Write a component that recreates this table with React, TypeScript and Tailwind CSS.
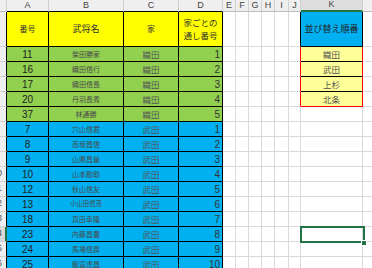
import React from "react";

const jp = { fontFamily: '"Noto Sans CJK JP", "Noto Sans", sans-serif' };
const num = { fontFamily: '"Liberation Sans", Arial, sans-serif' };

const oda = [
  [11, "柴田勝家", "織田", 1],
  [16, "織田信行", "織田", 2],
  [17, "織田信長", "織田", 3],
  [20, "丹羽長秀", "織田", 4],
  [37, "林通勝", "織田", 5],
];

const takeda = [
  [7, "穴山信君", "武田", 1],
  [8, "高坂昌信", "武田", 2],
  [9, "山県昌景", "武田", 3],
  [10, "山本勘助", "武田", 4],
  [12, "秋山信友", "武田", 5],
  [13, "小山田信茂", "武田", 6],
  [18, "真田幸隆", "武田", 7],
  [23, "内藤昌豊", "武田", 8],
  [24, "馬場信房", "武田", 9],
  [25, "飯富虎昌", "武田", 10],
];

const order = ["織田", "武田", "上杉", "北条"];

function Cell({ className = "", style, children }: any) {
  return (
    <div
      className={"box-border flex items-center overflow-hidden whitespace-nowrap border-r border-b " + className}
      style={style}
    >
      {children}
    </div>
  );
}

// only the right edge of the row header is on screen, so 1-9 are hidden
function RowHead({ n, selected }: { n: number; selected?: boolean }) {
  return (
    <Cell
      className={
        "h-full border-b-[#d0d0d0] " +
        (selected ? "bg-[#d9d9d9] border-r-2 border-r-[#217346]" : "bg-[#efefef] border-r-black")
      }
    >
      {n >= 10 && (
        <div className="w-[20px] ml-[-13px] shrink-0 text-center text-[9px] text-[#555]" style={num}>
          {n}
        </div>
      )}
    </Cell>
  );
}

export default function App() {
  const letters = ["A", "B", "C", "D", "E", "F", "G", "H", "I", "J", "K", ""];
  const rows = [...oda.map((r) => ({ r, bg: "bg-[#92d050]" })), ...takeda.map((r) => ({ r, bg: "bg-[#00b0f0]" }))];

  return (
    <div className="relative w-[372px] h-[268px] overflow-hidden bg-white">
      <div className="grid grid-cols-[7px_42px_75px_55px_44px_13px_13px_13px_13px_14px_12px_62px_60px] auto-rows-min">
        {/* column headers */}
        <Cell className="h-[12px] bg-[#efefef] border-r-[#d0d0d0] border-b-[#bdbdbd]" />
        {letters.map((l, i) => (
          <Cell
            key={"h" + i}
            className={
              "h-[12px] justify-center text-[9px] text-[#444] border-r-[#d0d0d0] " +
              (l === "K"
                ? "bg-[#dedede] border-b-2 border-b-[#217346]"
                : i < 4
                ? "bg-[#efefef] border-b-black"
                : "bg-[#efefef] border-b-[#bdbdbd]")
            }
            style={num}
          >
            {l}
          </Cell>
        ))}

        {/* row 1 */}
        <div className="h-[35px]">
          <RowHead n={1} />
        </div>
        <Cell className="h-[35px] justify-center bg-[#ffff00] border-black text-[8px] text-[#333]" style={jp}>
          番号
        </Cell>
        <Cell className="h-[35px] justify-center bg-[#ffff00] border-black text-[9px] text-[#333]" style={jp}>
          武将名
        </Cell>
        <Cell className="h-[35px] justify-center bg-[#ffff00] border-black text-[8px] text-[#333]" style={jp}>
          家
        </Cell>
        <Cell
          className="h-[35px] flex-col justify-center bg-[#ffff00] border-black text-[8.5px] leading-[13px] text-[#333]"
          style={jp}
        >
          <span>家ごとの</span>
          <span>通し番号</span>
        </Cell>
        {[0, 1, 2, 3, 4, 5].map((i) => (
          <Cell
            key={"e1" + i}
            className={"h-[35px] border-b-[#d9d9d9] " + (i === 5 ? "border-r-black" : "border-r-[#d9d9d9]")}
          />
        ))}
        <Cell className="h-[35px] justify-center bg-[#00b0f0] border-black text-[9px] text-[#222]" style={jp}>
          並び替え順番
        </Cell>
        <Cell className="h-[35px] border-[#d9d9d9]" />

        {/* data rows */}
        {rows.map(({ r, bg }, idx) => {
          const rowNo = idx + 2;
          const k = order[idx];
          return (
            <React.Fragment key={rowNo}>
              <div className="h-[15px]">
                <RowHead n={rowNo} selected={rowNo === 14} />
              </div>
              <Cell className={"h-[15px] justify-center border-black text-[10px] text-[#222] " + bg} style={num}>
                {r[0]}
              </Cell>
              <Cell className={"h-[15px] justify-center border-black text-[7px] text-[#4a4a4a] " + bg} style={jp}>
                <span className={String(r[1]).length > 4 ? "text-[6.3px]" : ""}>{r[1]}</span>
              </Cell>
              <Cell className={"h-[15px] justify-center border-black text-[8.5px] text-[#555] " + bg} style={jp}>
                {r[2]}
              </Cell>
              <Cell className={"h-[15px] justify-end pr-[2px] border-black text-[10px] text-[#333] " + bg} style={num}>
                {r[3]}
              </Cell>
              {[0, 1, 2, 3, 4, 5].map((i) => (
                <Cell
                  key={"e" + rowNo + i}
                  className={
                    "h-[15px] border-b-[#d9d9d9] " +
                    (i === 5 && k ? "border-r-[#ff0000]" : "border-r-[#d9d9d9]")
                  }
                />
              ))}
              {k ? (
                <Cell
                  className={
                    "h-[15px] justify-center bg-[#ffff99] border-r-[#ff0000] text-[8.5px] text-[#555] " +
                    (idx === 3 ? "border-b-[#ff0000]" : "border-b-black")
                  }
                  style={jp}
                >
                  {k}
                </Cell>
              ) : (
                <Cell className="h-[15px] border-[#d9d9d9]" />
              )}
              <Cell className="h-[15px] border-[#d9d9d9]" />
            </React.Fragment>
          );
        })}
      </div>

      {/* active cell K14 */}
      <div className="absolute left-[300px] top-[226px] w-[65px] h-[17px] border-2 border-[#217346]" />
      <div className="absolute left-[361px] top-[240px] w-[6px] h-[6px] bg-[#217346] border border-white" />
    </div>
  );
}
